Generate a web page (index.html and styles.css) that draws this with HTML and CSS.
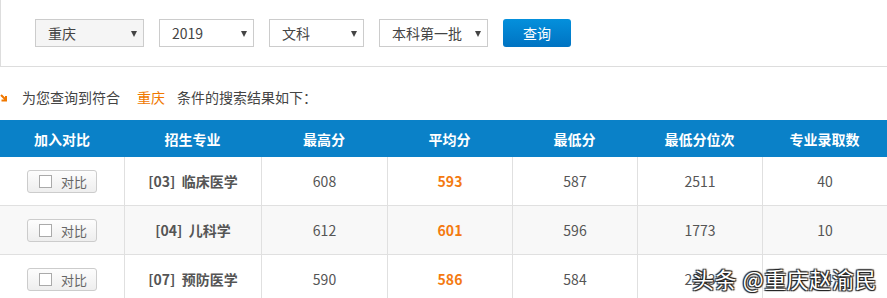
FILE: index.html
```html
<!DOCTYPE html>
<html lang="zh-CN">
<head>
<meta charset="utf-8">
<title>查询结果</title>
<link rel="stylesheet" href="styles.css">
</head>
<body>
<div class="page">
  <div class="panel">
    <div class="select grey"><span>重庆</span><i class="caret"></i></div>
    <div class="select w95"><span>2019</span><i class="caret"></i></div>
    <div class="select w95"><span>文科</span><i class="caret"></i></div>
    <div class="select"><span>本科第一批</span><i class="caret"></i></div>
    <button class="btn">查询</button>
  </div>

  <div class="result">
    <svg class="arrow" width="8" height="8" viewBox="0 0 8 8"><path d="M1 1 L6 6 M6 2 V6.5 H1.5" stroke="#f07800" stroke-width="2" fill="none"/></svg>
    <span>为您查询到符合</span><span class="hl">重庆</span><span>条件的搜索结果如下：</span>
  </div>

  <div class="table">
    <div class="row head">
      <div class="c">加入对比</div><div class="c">招生专业</div><div class="c">最高分</div><div class="c">平均分</div><div class="c">最低分</div><div class="c">最低分位次</div><div class="c">专业录取数</div>
    </div>
    <div class="row">
      <div class="c"><span class="cmp"><i class="box"></i>对比</span></div><div class="c b">[03]&nbsp;&nbsp;临床医学</div><div class="c">608</div><div class="c avg">593</div><div class="c">587</div><div class="c">2511</div><div class="c">40</div>
    </div>
    <div class="row alt">
      <div class="c"><span class="cmp"><i class="box"></i>对比</span></div><div class="c b">[04]&nbsp;&nbsp;儿科学</div><div class="c">612</div><div class="c avg">601</div><div class="c">596</div><div class="c">1773</div><div class="c">10</div>
    </div>
    <div class="row">
      <div class="c"><span class="cmp"><i class="box"></i>对比</span></div><div class="c b">[07]&nbsp;&nbsp;预防医学</div><div class="c">590</div><div class="c avg">586</div><div class="c">584</div><div class="c">2233</div><div class="c">14</div>
    </div>
  </div>

  <div class="watermark">头条 @重庆赵渝民</div>
</div>
</body>
</html>
```

FILE: styles.css
```css
* { box-sizing: border-box; }
html, body { margin: 0; padding: 0; background: #fff; }
body {
  font-family: "Noto Sans CJK SC", "Noto Sans", sans-serif;
  font-size: 14px;
  color: #555;
  overflow: hidden;
}
.page { position: relative; width: 887px; height: 298px; }

.panel {
  height: 67px;
  border-left: 1px solid #ddd;
  border-bottom: 1px solid #ddd;
  padding: 19px 0 0 34px;
  display: flex;
  gap: 15px;
  align-items: flex-start;
}
.select {
  position: relative;
  width: 109px;
  height: 28px;
  border: 1px solid #ccc;
  background: #fff;
  padding-left: 12px;
  line-height: 26px;
  color: #444;
  font-size: 14px;
}
.select.w95 { width: 95px; }
.select.grey { background: #f5f5f5; }
.caret {
  position: absolute;
  right: 6px;
  top: 11px;
  width: 0; height: 0;
  border-left: 3.5px solid transparent;
  border-right: 3.5px solid transparent;
  border-top: 6px solid #444;
}
.btn {
  width: 68px;
  height: 28px;
  border: 0;
  border-radius: 3px;
  background: linear-gradient(#0490dc, #0073c2);
  color: #fff;
  font-family: inherit;
  font-size: 14px;
  padding: 0;
  line-height: 28px;
}

.result {
  margin-top: 20px;
  height: 20px;
  display: flex;
  align-items: center;
  line-height: 20px;
  color: #444;
}
.arrow { margin-right: 14px; margin-top: 1px; }
.hl { color: #f07800; margin: 0 12px 0 17px; }

.table { margin-top: 13px; }
.row {
  display: grid;
  grid-template-columns: 124px 137px 126px 125px 125px 125px 125px;
  height: 49px;
  border-bottom: 1px solid #e0e0e0;
}
.row.alt { background: #f8f8f8; }
.row .c {
  display: flex;
  align-items: center;
  justify-content: center;
  border-left: 1px solid #e0e0e0;
  font-size: 14px;
  color: #555;
}
.row .c:first-child { border-left: 0; }
.row.head {
  height: 37px;
  background: #0a81c8;
  border-bottom: 0;
}
.row.head .c {
  border-left: 0;
  color: #fff;
  font-weight: bold;
}
.c.b { font-weight: bold; color: #555; }
.c.avg { font-weight: bold; color: #f47a10; }

.cmp {
  display: flex;
  align-items: center;
  width: 70px;
  height: 23px;
  border: 1px solid #ccc;
  border-radius: 3px;
  background: linear-gradient(#fdfdfd, #eeeeee);
  padding-left: 11px;
  font-size: 13px;
  color: #666;
}
.box {
  width: 13px;
  height: 13px;
  border: 1px solid #aaa;
  background: #fff;
  margin-right: 9px;
}

.watermark {
  position: absolute;
  left: 692px;
  top: 263px;
  font-size: 22px;
  line-height: 30px;
  color: #fff;
  letter-spacing: 0.6px;
  text-shadow: 0 0 1px #222, 1px 1px 1px #222, -1px -1px 1px #222, 1px -1px 1px #222, -1px 1px 1px #222;
}
```
